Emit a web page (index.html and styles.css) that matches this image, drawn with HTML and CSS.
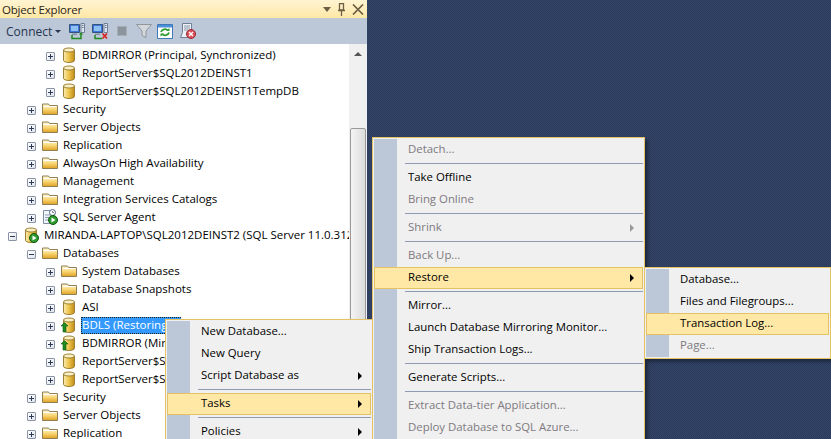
FILE: index.html

```html
<!DOCTYPE html>
<html lang="en">
<head>
  <meta charset="UTF-8" />
  <title>Object Explorer</title>
  <link rel="stylesheet" href="styles.css">
</head>
<body>
  <svg class="defs" xmlns="http://www.w3.org/2000/svg">
    <defs>
      <linearGradient id="gold" x1="0" x2="1" y1="0" y2="0">
        <stop offset="0" stop-color="#f9ebb4"/><stop offset=".45" stop-color="#f0c850"/><stop offset="1" stop-color="#c08c18"/>
      </linearGradient>
      <linearGradient id="fold" x1="0" x2="0" y1="0" y2="1">
        <stop offset="0" stop-color="#fdf6d8"/><stop offset=".5" stop-color="#f9d878"/><stop offset="1" stop-color="#dfa020"/>
      </linearGradient>
      <symbol id="db" viewBox="0 0 16 16">
        <path d="M2.500 3v10.500c0 1 2.500 2 5.500 2s5.500-1 5.500-2V3z" fill="url(#gold)" stroke="#9c8136"/>
        <ellipse cx="8" cy="3" rx="5.500" ry="2" fill="#fbf0c4" stroke="#9c8136"/>
      </symbol>
      <symbol id="folder" viewBox="0 0 16 16">
        <path d="M.5 13.500V3h6l1 1.500h8v9z" fill="url(#fold)" stroke="#8f7f55"/>
        <path d="M1.500 5.500h13" stroke="#fff" stroke-width="1"/>
      </symbol>
      <symbol id="arrow" viewBox="0 0 16 16">
        <path d="M3.500 5.500L7 9H5v6H2V9H0z" fill="#1f8a1f" stroke="#0d5c0d" stroke-width=".6"/>
      </symbol>
      <symbol id="play" viewBox="0 0 16 16">
        <circle cx="11" cy="11" r="4.500" fill="#2f9a2f" stroke="#0d5c0d"/>
        <path d="M9.500 8.500L13.500 11l-4 2.500z" fill="#fff"/>
      </symbol>
      <symbol id="agent" viewBox="0 0 16 16">
        <path d="M1.500 1.500h9v13h-9z" fill="#f2f5fa" stroke="#7d8ca3"/>
        <path d="M3 6h6M3 8.500h4M3 11h4" stroke="#8fa0b8"/>
        <circle cx="10.500" cy="3.500" r="3" fill="#fff" stroke="#56657c"/>
        <path d="M10.500 2v1.500h1.500" stroke="#56657c" fill="none" stroke-width=".8"/>
      </symbol>
      <symbol id="pc" viewBox="0 0 16 16">
        <path d="M.5 1.500h10v8h-10z" fill="#3c78d8" stroke="#36537f"/>
        <path d="M2 3h7v5H2z" fill="#8ec0f2"/>
        <path d="M3 10.500h5v1.500H3z" fill="#7f8fa5"/>
        <path d="M12 .5h3.500v9H12z" fill="#dfe5ee" stroke="#6f7f98"/>
        <path d="M13 2.500h1.500M13 4.500h1.500" stroke="#4a5a74" stroke-width=".8"/>
      </symbol>
    </defs>
  </svg>

  <div class="app">
    <section class="explorer">
      <div class="title-bar">
        <span class="title">Object Explorer</span>
        <span class="title-btns">
          <svg width="8" height="5" viewBox="0 0 8 5"><path d="M0 0h8L4 5z" fill="#6b5f44"/></svg>
          <svg width="7" height="13" viewBox="0 0 7 13"><path d="M1.500.5h4v6.500h-4zM0 7.500h7M3.500 8v5" fill="none" stroke="#6b5f44" stroke-width="1.300"/></svg>
          <svg width="12" height="11" viewBox="0 0 12 11"><path d="M1 .5l10 10M11 .5L1 10.500" fill="none" stroke="#6b5f44" stroke-width="1.700"/></svg>
        </span>
      </div>
      <div class="toolbar">
        <span class="connect">Connect</span>
        <span class="caret"></span>
        <svg class="tool tool-first" width="16" height="17" viewBox="0 0 16 17"><use href="#pc" width="16" height="16"/><path d="M3 12v3.500h9V11" fill="none" stroke="#1f8a1f" stroke-width="1.500"/><path d="M10 11.500h4L12 9z" fill="#1f8a1f"/></svg>
        <svg class="tool" width="16" height="17" viewBox="0 0 16 17"><use href="#pc" width="16" height="16"/><path d="M3 12v3.500h7" fill="none" stroke="#1f8a1f" stroke-width="1.500"/><path d="M10.500 10.500l4.500 5M15 10.500l-4.500 5" stroke="#d8231f" stroke-width="1.700"/></svg>
        <span class="stop"></span>
        <svg class="filter" width="16" height="14" viewBox="0 0 16 14"><path d="M.5.500h15L10 7v6.500L6 11.500V7z" fill="#d4d8dc" stroke="#8f969c"/></svg>
        <svg class="refresh" width="16" height="15" viewBox="0 0 16 15"><path d="M.5.500h15v14H.5z" fill="#fff" stroke="#3f78b8"/><path d="M1 1h14v2.500H1z" fill="#4d8fd8"/><path d="M4 8a4 3.500 0 0 1 7-1.500M12 8.500a4 3.500 0 0 1-7 1.500" fill="none" stroke="#2d9a2d" stroke-width="1.700"/><path d="M9 7h3.500V4zM7 9.500H3.500V12.500z" fill="#2d9a2d"/></svg>
        <svg class="scroll-stop" width="17" height="16" viewBox="0 0 17 16"><path d="M3.500.5h9v9l-2 5h-9l2-5z" fill="#eef1f5" stroke="#6f7f98"/><path d="M5 3h6M5 5h6M5 7h4" stroke="#8795aa"/><circle cx="12" cy="11" r="4.500" fill="#d8505a" stroke="#9c2a32"/><path d="M10 9l4 4M14 9l-4 4" stroke="#fff" stroke-width="1.400"/></svg>
      </div>
      <div class="tree-wrap">
        <ul class="tree">
          <li class="row l3"><span class="exp"></span><svg class="ico"><use href="#db"/></svg><span class="lbl">BDMIRROR (Principal, Synchronized)</span></li>
          <li class="row l3"><span class="exp"></span><svg class="ico"><use href="#db"/></svg><span class="lbl">ReportServer$SQL2012DEINST1</span></li>
          <li class="row l3"><span class="exp"></span><svg class="ico"><use href="#db"/></svg><span class="lbl">ReportServer$SQL2012DEINST1TempDB</span></li>
          <li class="row l2"><span class="exp"></span><svg class="ico"><use href="#folder"/></svg><span class="lbl">Security</span></li>
          <li class="row l2"><span class="exp"></span><svg class="ico"><use href="#folder"/></svg><span class="lbl">Server Objects</span></li>
          <li class="row l2"><span class="exp"></span><svg class="ico"><use href="#folder"/></svg><span class="lbl">Replication</span></li>
          <li class="row l2"><span class="exp"></span><svg class="ico"><use href="#folder"/></svg><span class="lbl">AlwaysOn High Availability</span></li>
          <li class="row l2"><span class="exp"></span><svg class="ico"><use href="#folder"/></svg><span class="lbl">Management</span></li>
          <li class="row l2"><span class="exp"></span><svg class="ico"><use href="#folder"/></svg><span class="lbl">Integration Services Catalogs</span></li>
          <li class="row l2"><span class="exp"></span><svg class="ico"><use href="#agent"/><use href="#play"/></svg><span class="lbl">SQL Server Agent</span></li>
          <li class="row l1"><span class="exp open"></span><svg class="ico"><use href="#db"/><use href="#play"/></svg><span class="lbl">MIRANDA-LAPTOP\SQL2012DEINST2 (SQL Server 11.0.312</span></li>
          <li class="row l2"><span class="exp open"></span><svg class="ico"><use href="#folder"/></svg><span class="lbl">Databases</span></li>
          <li class="row l3"><span class="exp"></span><svg class="ico"><use href="#folder"/></svg><span class="lbl">System Databases</span></li>
          <li class="row l3"><span class="exp"></span><svg class="ico"><use href="#folder"/></svg><span class="lbl">Database Snapshots</span></li>
          <li class="row l3"><span class="exp"></span><svg class="ico"><use href="#db"/></svg><span class="lbl">ASI</span></li>
          <li class="row l3"><span class="exp"></span><svg class="ico"><use href="#db"/><use href="#arrow"/></svg><span class="lbl selected">BDLS (Restoring...)</span></li>
          <li class="row l3"><span class="exp"></span><svg class="ico"><use href="#db"/><use href="#arrow"/></svg><span class="lbl">BDMIRROR (Mirror, Synchronized)</span></li>
          <li class="row l3"><span class="exp"></span><svg class="ico"><use href="#db"/></svg><span class="lbl">ReportServer$SQL2012DEINST2</span></li>
          <li class="row l3"><span class="exp"></span><svg class="ico"><use href="#db"/></svg><span class="lbl">ReportServer$SQL2012DEINST2TempDB</span></li>
          <li class="row l2"><span class="exp"></span><svg class="ico"><use href="#folder"/></svg><span class="lbl">Security</span></li>
          <li class="row l2"><span class="exp"></span><svg class="ico"><use href="#folder"/></svg><span class="lbl">Server Objects</span></li>
          <li class="row l2"><span class="exp"></span><svg class="ico"><use href="#folder"/></svg><span class="lbl">Replication</span></li>
        </ul>
        <div class="scrollbar">
          <span class="scroll-up"></span>
          <span class="thumb"></span>
        </div>
      </div>
    </section>
    <div class="workspace"></div>

    <ul class="menu menu-db">
      <li class="item">New Database...</li>
      <li class="item">New Query</li>
      <li class="item">Script Database as<span class="sub"></span></li>
      <li class="sep"></li>
      <li class="item hot">Tasks<span class="sub"></span></li>
      <li class="sep"></li>
      <li class="item">Policies<span class="sub"></span></li>
    </ul>

    <ul class="menu menu-tasks">
      <li class="item off">Detach...</li>
      <li class="sep"></li>
      <li class="item">Take Offline</li>
      <li class="item off">Bring Online</li>
      <li class="sep"></li>
      <li class="item off">Shrink<span class="sub"></span></li>
      <li class="sep"></li>
      <li class="item off">Back Up...</li>
      <li class="item hot">Restore<span class="sub"></span></li>
      <li class="sep"></li>
      <li class="item">Mirror...</li>
      <li class="item">Launch Database Mirroring Monitor...</li>
      <li class="item">Ship Transaction Logs...</li>
      <li class="sep"></li>
      <li class="item">Generate Scripts...</li>
      <li class="sep"></li>
      <li class="item off">Extract Data-tier Application...</li>
      <li class="item off">Deploy Database to SQL Azure...</li>
    </ul>

    <ul class="menu menu-restore">
      <li class="item">Database...</li>
      <li class="item">Files and Filegroups...</li>
      <li class="item hot">Transaction Log...</li>
      <li class="item off">Page...</li>
    </ul>
  </div>
</body>
</html>
```

FILE: styles.css

```css
* {
  box-sizing: border-box;
}
body {
  margin: 0;
  font-family: "Open Sans", "Noto Sans", sans-serif;
  font-size: 11.5px;
  color: #000;
  overflow: hidden;
}
ul {
  list-style: none;
  margin: 0;
  padding: 0;
}
.defs {
  display: block;
  width: 0;
  height: 0;
}
.app {
  position: relative;
  display: flex;
  height: 439px;
  overflow: hidden;
}
.explorer {
  display: flex;
  flex-direction: column;
  width: 367px;
  flex: none;
}
.workspace {
  flex: 1;
  background-color: #2d3f5e;
  background-image: conic-gradient(#2a3a58 25%, #33456a 0 50%, #2a3a58 0 75%, #33456a 0);
  background-size: 2px 2px;
}

/* title + toolbar */
.title-bar {
  display: flex;
  align-items: center;
  justify-content: space-between;
  height: 18px;
  padding: 0 3px 0 2px;
  background: linear-gradient(#fff4d2, #ffe8a6);
  font-size: 11.5px;
  letter-spacing: -0.2px;
  color: #2a2416;
}
.title-btns {
  display: flex;
  align-items: center;
  gap: 7px;
}
.toolbar {
  display: flex;
  align-items: center;
  height: 26px;
  padding-left: 6px;
  background: #bcc7d8;
  color: #26344e;
  font-size: 12px;
}
.caret {
  width: 0;
  height: 0;
  margin-left: 3px;
  border-left: 3px solid transparent;
  border-right: 3px solid transparent;
  border-top: 3px solid #26344e;
}
.tool {
  margin-left: 7px;
}
.tool-first {
  margin-left: 8px;
}
.stop {
  width: 8px;
  height: 8px;
  margin-left: 10px;
  background: #8c949e;
  box-shadow: 0 0 0 1px #a4acb6;
}
.filter {
  margin-left: 10px;
}
.refresh {
  margin-left: 5px;
}
.scroll-stop {
  margin-left: 6px;
}

/* tree */
.tree-wrap {
  display: flex;
  flex: 1;
  min-height: 0;
  background: #fff;
}
.tree {
  flex: 1;
  min-width: 0;
  padding-top: 2px;
  overflow: hidden;
}
.row {
  display: flex;
  align-items: center;
  height: 18px;
  white-space: nowrap;
}
.l1 {
  padding-left: 8px;
}
.l2 {
  padding-left: 27px;
}
.l3 {
  padding-left: 46px;
}
.exp {
  position: relative;
  flex: none;
  width: 9px;
  height: 9px;
  margin: 3px 6px 0 0;
  border: 1px solid #8a94a6;
  border-radius: 1px;
  background: linear-gradient(135deg, #fff, #dfe3ea);
}
.exp::before,
.exp::after {
  content: "";
  position: absolute;
  background: #2c3a55;
}
.exp::before {
  left: 1px;
  top: 3px;
  width: 5px;
  height: 1px;
}
.exp::after {
  left: 3px;
  top: 1px;
  width: 1px;
  height: 5px;
}
.exp.open::after {
  display: none;
}
.ico {
  flex: none;
  width: 16px;
  height: 16px;
  margin-right: 5px;
}
.lbl {
  line-height: 16px;
}
.selected {
  width: 100px;
  height: 17px;
  margin-left: -1px;
  padding-left: 1px;
  background: #3399ff;
  color: #fff;
  outline: 1px dotted #222;
  outline-offset: -1px;
}

/* scrollbar */
.scrollbar {
  display: flex;
  flex-direction: column;
  flex: none;
  width: 18px;
  background: #f0f0f0;
}
.scroll-up {
  width: 0;
  height: 0;
  margin: 8px 0 0 5px;
  border-left: 4px solid transparent;
  border-right: 4px solid transparent;
  border-bottom: 4px solid #555;
}
.thumb {
  height: 260px;
  margin: 72px 1px 0;
  border: 1px solid #9a9a9a;
  border-radius: 2px;
  background: linear-gradient(to right, #f4f4f4, #dcdcdc);
}

/* context menus */
.menu {
  position: absolute;
  padding: 1px;
  border: 1px solid #e5c365;
  background: #f0f0f0;
  box-shadow: 3px 3px 3px rgba(0, 0, 0, 0.35);
}
.menu-db {
  left: 165px;
  top: 319px;
  width: 208px;
}
.menu-tasks {
  left: 372px;
  top: 137px;
  width: 273px;
}
.menu-restore {
  left: 644px;
  top: 267px;
  width: 187px;
}
.menu::before {
  content: "";
  position: absolute;
  left: 1px;
  top: 1px;
  bottom: 1px;
  width: 23px;
  background: #bcc7d8;
}
.item {
  position: relative;
  display: flex;
  align-items: center;
  height: 22px;
  padding: 0 8px 3px 33px;
  border: 1px solid transparent;
  font-size: 11.4px;
  white-space: nowrap;
}
.item.hot {
  border-color: #e5c365;
  background: #ffe8a6;
}
.item.off {
  color: #7e7a80;
}
.sub {
  width: 0;
  height: 0;
  margin: 3px 0 0 auto;
  border-top: 4px solid transparent;
  border-bottom: 4px solid transparent;
  border-left: 4px solid #000;
}
.off .sub {
  border-left-color: #999;
}
.sep {
  position: relative;
  height: 1px;
  margin: 2px 0 3px 31px;
  background: #8e9bb2;
}
```
